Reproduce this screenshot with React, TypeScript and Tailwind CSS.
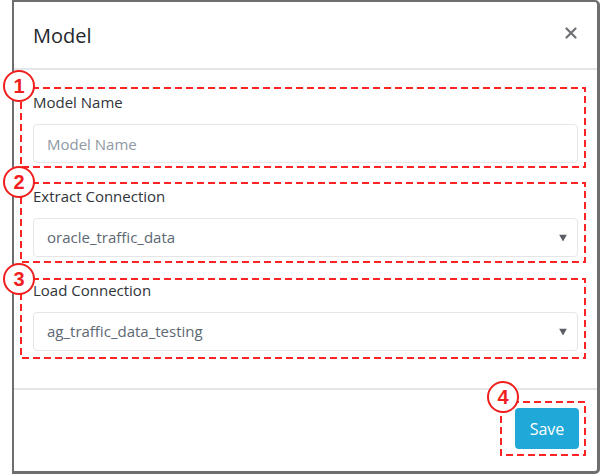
import React from 'react';

const font = { fontFamily: '"Open Sans", "Noto Sans", sans-serif' };

// red dashed annotation frame
const DashedBox = ({ w, h, className }: { w: number; h: number; className: string }) => (
    <svg className={`absolute pointer-events-none ${className}`} width={w} height={h}>
        <rect x={1} y={1} width={w - 2} height={h - 2} fill="none" stroke="#ff2424" strokeWidth={2} strokeDasharray="7 4" />
    </svg>
);

const Badge = ({ n, className }: { n: number; className: string }) => (
    <div
        className={`absolute w-[32px] h-[32px] rounded-full border-2 border-[#f01e1e] bg-white flex items-center justify-center text-[#f01e1e] font-bold text-[20px] leading-none ${className}`}
        style={{ fontFamily: '"Liberation Sans", Arial, sans-serif' }}
    >
        {n}
    </div>
);

const Caret = () => (
    <svg width="8" height="7" viewBox="0 0 8 7" className="absolute right-[10px] top-1/2 -translate-y-1/2">
        <path d="M0 0 H8 L4 7 Z" fill="#5a5f66" />
    </svg>
);

export default function App() {
    return (
        <div className="w-[600px] h-[474px] bg-white overflow-hidden" style={font}>
            <div className="ml-[12px] w-[588px] h-[474px] bg-white border-l-2 border-t-2 border-r-[3px] border-b-[3px] border-[#6e6e6e] rounded-tr-[5px] rounded-br-[5px] flex flex-col">
                {/* header */}
                <div className="h-[68px] flex items-center justify-between pl-[19px] pr-[20px] border-b-2 border-[#e4e7ea]">
                    <h2 className="text-[20px] text-[#23282c] font-normal mt-[1px]">Model</h2>
                    <svg width="12" height="12" viewBox="0 0 12 12" className="mt-[-4px]">
                        <path d="M1.5 1.5 L10.5 10.5 M10.5 1.5 L1.5 10.5" stroke="#6f7275" strokeWidth={2.2} strokeLinecap="round" />
                    </svg>
                </div>

                {/* body */}
                <div className="px-[19px] pt-[21px] pb-[37px] flex flex-col gap-[22px] border-b-2 border-[#e4e7ea]">
                    <div className="relative">
                        <DashedBox w={566} h={81} className="left-[-13px] top-[-4px]" />
                        <Badge n={1} className="left-[-30px] top-[-21px]" />
                        <label className="block text-[15px] leading-[22px] text-[#2f353a] mb-[11px]">Model Name</label>
                        <input
                            placeholder="Model Name"
                            className="w-full h-[39px] px-[13px] rounded-[4px] border border-[#e4e7ea] text-[15px] text-[#5c6873] placeholder:text-[#8f99a3] outline-none"
                        />
                    </div>
                    <div className="relative">
                        <DashedBox w={566} h={81} className="left-[-13px] top-[-3px]" />
                        <Badge n={2} className="left-[-30px] top-[-19px]" />
                        <label className="block text-[15px] leading-[22px] text-[#2f353a] mb-[11px]">Extract Connection</label>
                        <div className="relative w-full h-[39px] px-[13px] rounded-[4px] border border-[#e4e7ea] text-[15px] text-[#5c6873] flex items-center">
                            oracle_traffic_data
                            <Caret />
                        </div>
                    </div>
                    <div className="relative">
                        <DashedBox w={566} h={81} className="left-[-13px] top-[-1px]" />
                        <Badge n={3} className="left-[-30px] top-[-16px]" />
                        <label className="block text-[15px] leading-[22px] text-[#2f353a] mb-[11px]">Load Connection</label>
                        <div className="relative w-full h-[39px] px-[13px] rounded-[4px] border border-[#e4e7ea] text-[15px] text-[#5c6873] flex items-center">
                            ag_traffic_data_testing
                            <Caret />
                        </div>
                    </div>
                </div>

                {/* footer */}
                <div className="flex-1 flex justify-end items-start pt-[18px] pr-[18px]">
                    <div className="relative">
                        <DashedBox w={86} h={55} className="left-[-15px] top-[-7px]" />
                        <Badge n={4} className="left-[-28px] top-[-27px]" />
                        <button className="relative w-[64px] h-[41px] rounded-[4px] bg-[#20a8d8] text-white text-[16px]">
                            Save
                        </button>
                    </div>
                </div>
            </div>
        </div>
    );
}
